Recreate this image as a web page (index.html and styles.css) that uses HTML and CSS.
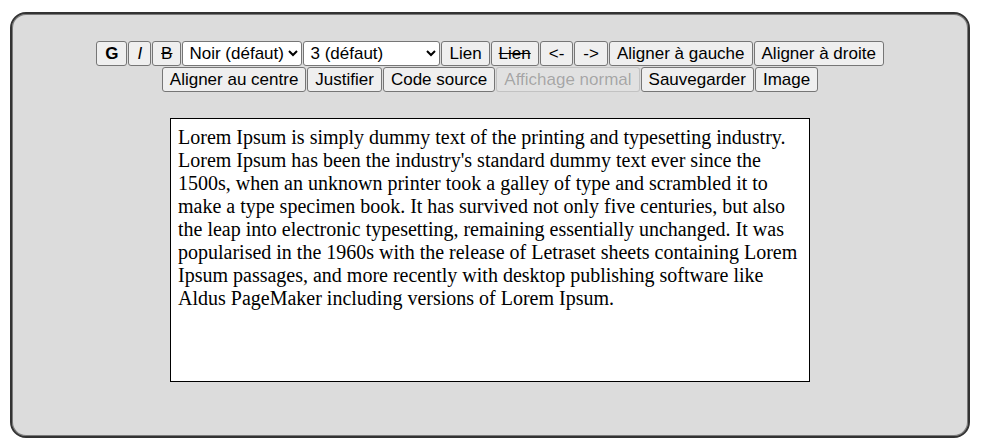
FILE: index.html
```html
<!DOCTYPE html>
<html lang="fr">
<head>
<meta charset="utf-8">
<title>Éditeur</title>
<link rel="stylesheet" href="styles.css">
</head>
<body>
<div class="editor">
  <div class="toolbar">
    <button class="btn small bold">G</button>
    <button class="btn small italic">I</button>
    <button class="btn small strike">B</button>
    <select class="sel sel-color"><option>Noir (défaut)</option></select>
    <select class="sel sel-size"><option>3 (défaut)</option></select>
    <button class="btn">Lien</button>
    <button class="btn strike">Lien</button>
    <button class="btn small">&lt;-</button>
    <button class="btn small">-&gt;</button>
    <button class="btn">Aligner à gauche</button>
    <button class="btn">Aligner à droite</button>
    <button class="btn">Aligner au centre</button>
    <button class="btn">Justifier</button>
    <button class="btn">Code source</button>
    <button class="btn" disabled>Affichage normal</button>
    <button class="btn">Sauvegarder</button>
    <button class="btn">Image</button>
  </div>
  <div class="content" contenteditable="true">Lorem Ipsum is simply dummy text of the printing and typesetting industry. Lorem Ipsum has been the industry's standard dummy text ever since the 1500s, when an unknown printer took a galley of type and scrambled it to make a type specimen book. It has survived not only five centuries, but also the leap into electronic typesetting, remaining essentially unchanged. It was popularised in the 1960s with the release of Letraset sheets containing Lorem Ipsum passages, and more recently with desktop publishing software like Aldus PageMaker including versions of Lorem Ipsum.</div>
</div>
</body>
</html>
```
FILE: styles.css
```css
html, body {
  margin: 0;
  padding: 0;
  background: #ffffff;
}

body {
  padding: 12px 0 0 10px;
}

.editor {
  box-sizing: border-box;
  width: 960px;
  height: 426px;
  background: #dcdcdc;
  border: 2px solid #333333;
  border-radius: 16px;
  box-shadow: inset 0 0 0 1px #7a7a7a;
  padding: 27px 20px 0;
}

.toolbar {
  display: flex;
  flex-wrap: wrap;
  justify-content: center;
  gap: 1px 1px;
  margin: 0 auto;
  width: 840px;
}

.btn {
  font-family: "Liberation Sans", Arial, sans-serif;
  font-size: 17px;
  color: #000;
  background: #efefef;
  border: 1px solid #767676;
  border-radius: 3px;
  padding: 0 7px;
  height: 25px;
  line-height: 22px;
  margin: 0;
}

.btn.small { padding: 0 8px; }
.btn.bold { font-weight: bold; }
.btn.italic { font-style: italic; }
.btn.strike { text-decoration: line-through; }

.btn:disabled {
  color: rgba(16, 16, 16, 0.3);
  background: rgba(239, 239, 239, 0.3);
  border-color: rgba(118, 118, 118, 0.3);
}

.sel {
  font-family: "Liberation Sans", Arial, sans-serif;
  font-size: 17px;
  color: #000;
  background: #fff;
  border: 1px solid #767676;
  border-radius: 3px;
  height: 25px;
  margin: 0;
  padding: 0 0 0 2px;
}

.sel-color { width: 120px; }
.sel-size { width: 137px; }

.content {
  box-sizing: border-box;
  width: 640px;
  height: 264px;
  margin: 26px auto 0;
  background: #fff;
  border: 1px solid #000;
  padding: 7px 7px 5px;
  font-family: "Liberation Serif", "Times New Roman", serif;
  font-size: 20px;
  line-height: 23px;
  color: #000;
  outline: none;
}
```
